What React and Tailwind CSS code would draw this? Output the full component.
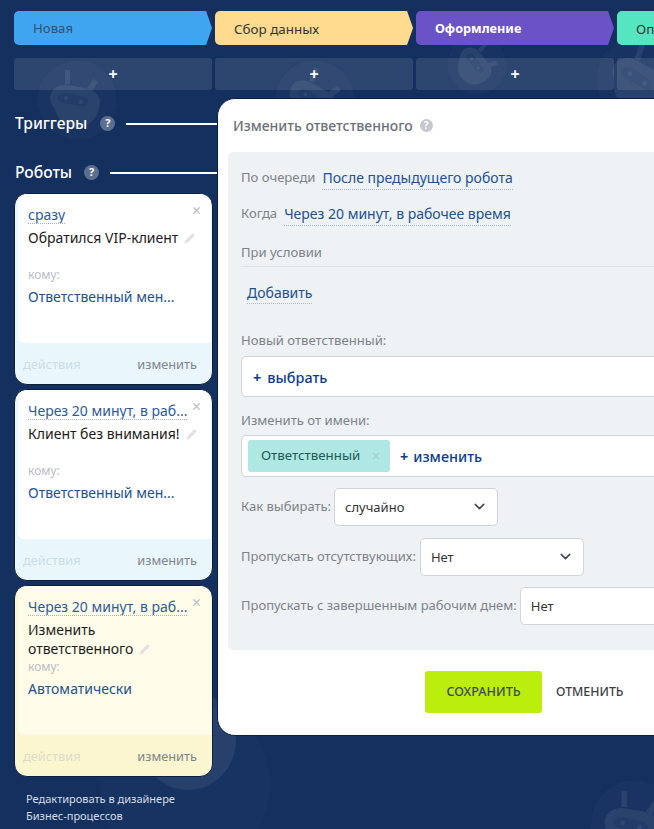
import React from "react";
import { ChevronDown, Pencil, X } from "lucide-react";

const stages = [
  { name: "Новая", style: "bg-[#40a5f0] text-[#33516f] text-[13.2px]" },
  { name: "Сбор данных", style: "bg-[#fedb8f] text-[#333] text-[13.4px]" },
  { name: "Оформление", style: "bg-[#6a52c7] text-white text-[12.7px] font-bold" },
  { name: "Оплата", style: "bg-[#55e6c1] text-[#333] text-[13.4px]" },
];

const Help = ({ className }) => (
  <span className={"flex items-center justify-center rounded-full font-bold text-white " + className}>?</span>
);

const Bot = ({ className }) => (
  <svg viewBox="0 0 80 80" className={"absolute " + className} fill="#fff">
    <circle cx="40" cy="40" r="39.5" opacity="0.025" />
    <g opacity="0.07">
      <path d="M28 10h5v14h-5zM56 19l5 3-6 9-5-3z" />
      <path d="M13 38c0-8 7-14 17-13l18 3c10 2 15 8 15 14-1 12-7 25-24 25-11 0-19-8-21-18-3-3-5-7-5-11z" />
    </g>
    <path d="M22 35c2-2 5-2 8-2l17 4c4 1 5 4 4 6-1 3-4 4-8 3l-16-3c-6-1-8-5-5-8z" fill="#14305f" opacity="0.3" />
    <circle cx="29" cy="38" r="2" opacity="0.07" />
    <circle cx="44" cy="42" r="2" opacity="0.07" />
  </svg>
);

const RobotCard = ({ delay, title, who, wrapped, tone }) => (
  <div className={"relative flex h-[192px] flex-col overflow-hidden rounded-[13px] border border-[#0d1f40] " + tone.foot}>
    <div className={"ml-[3px] mr-px h-full rounded-bl-[6px] pl-[10px] pr-2 pt-[12px] " + tone.body}>
      <div className="flex">
        <span className="max-w-[164px] truncate border-b border-dotted border-[#9fb1c9] text-[14px] leading-[17px] text-[#2c5a9a]">
          {delay}
        </span>
      </div>
      <div className="mt-[4px] text-[14px] leading-[19px] text-[#1c1c1c]">
        {title}
        <Pencil size={11} className="ml-[6px] inline -translate-y-px text-[#e2e2e2]" fill="#e2e2e2" />
      </div>
      <div className={"text-[12px] leading-[16px] text-[#b9bcc4] " + (wrapped ? "mt-[1px]" : "mt-[20px]")}>кому:</div>
      <div className="mt-[4px] text-[14px] leading-[19px] text-[#23508f]">{who}</div>
    </div>
    <X size={11} strokeWidth={3.5} className="absolute right-[10px] top-[11px] text-[#c4c8ce]" />
    <div className="flex h-[41px] shrink-0 items-center justify-between pl-2 pr-[15px] pt-[2px] text-[12.8px]">
      <span className={tone.faint}>действия</span>
      <span className="text-[#80858c]">изменить</span>
    </div>
  </div>
);

const Dotted = ({ children }) => (
  <span className="border-b border-dotted border-[#a9b8cc] pb-[1px] text-[14px] text-[#23508f]">{children}</span>
);

const Select = ({ value }) => (
  <div className="flex h-[38px] w-[164px] shrink-0 items-center justify-between rounded-[5px] border border-[#d0d4da] bg-white pl-[10px] pr-[9px] text-[13px] text-[#333]">
    <span className="pt-[3px]">{value}</span>
    <ChevronDown size={17} strokeWidth={2} className="text-[#3a4452]" />
  </div>
);

export default function App() {
  const blue = { body: "bg-white", foot: "bg-[#e9f7fd]", faint: "text-[#ccdde5]" };
  const yellow = { body: "bg-[#fffde9]", foot: "bg-[#fbf6cf]", faint: "text-[#dcdcc8]" };
  return (
    <div className="relative h-[829px] w-[654px] overflow-hidden bg-[#14305f] font-['Noto_Sans','Open_Sans',sans-serif]">
      {/* faint pattern behind the board */}
      <Bot className="left-[37px] top-[60px] h-[80px] w-[80px]" />
      <Bot className="left-[275px] top-[60px] h-[80px] w-[80px] rotate-[20deg]" />
      <Bot className="left-[447px] top-[35px] h-[60px] w-[60px] rotate-[40deg]" />
      <Bot className="left-[596px] top-[35px] h-[90px] w-[90px] rotate-[20deg]" />
      <Bot className="left-[590px] top-[780px] h-[90px] w-[90px]" />
      <div className="absolute left-[100px] top-[700px] h-[170px] w-[170px] rounded-full bg-white opacity-[0.015]" />
      <div className="absolute left-[140px] top-[690px] h-[100px] w-[96px] rounded-[50%] bg-white opacity-[0.07]" />

      <div className="relative flex flex-col pl-[14px] pt-[11px]">
        <div className="flex w-[800px] gap-[3px]">
          {stages.map((s) => (
            <div
              key={s.name}
              className={"flex h-[34px] w-[198px] shrink-0 items-center rounded-l-[5px] pl-[19px] pt-[2px] [clip-path:polygon(0_0,97%_0,100%_50%,97%_100%,0_100%)] " + s.style}
            >
              {s.name}
            </div>
          ))}
        </div>
        <div className="mt-[13px] flex w-[800px] gap-[3px]">
          {stages.map((s) => (
            <div key={s.name} className="flex h-[32px] w-[198px] shrink-0 items-center justify-center rounded-[3px] bg-white/[0.11] text-[16px] font-bold text-white">
              {s.name === "Оплата" ? "" : "+"}
            </div>
          ))}
        </div>

        <div className="mt-[21px] flex h-[25px] items-center pl-px text-[15.6px] font-medium text-white">
          Триггеры
          <Help className="ml-[13px] h-[15px] w-[15px] bg-[#5c6f8f] text-[11px]" />
          <div className="ml-[11px] h-[2px] w-[100px] bg-white" />
        </div>
        <div className="mt-[24px] flex h-[25px] items-center pl-px text-[15.6px] font-medium text-white">
          Роботы
          <Help className="ml-[12px] h-[15px] w-[15px] bg-[#5c6f8f] text-[11px]" />
          <div className="ml-[11px] h-[2px] w-[115px] bg-white" />
        </div>

        <div className="mt-[8px] flex w-[199px] flex-col gap-[4px]">
          <RobotCard delay="сразу" title="Обратился VIP-клиент" who="Ответственный мен..." tone={blue} />
          <RobotCard delay="Через 20 минут, в раб..." title="Клиент без внимания!" who="Ответственный мен..." tone={blue} />
          <RobotCard delay="Через 20 минут, в раб..." title="Изменить ответственного" who="Автоматически" wrapped tone={yellow} />
        </div>
        <div className="mt-[13px] pl-[12px] text-[11px] leading-[17px] text-[#d6dde8]">
          Редактировать в дизайнере
          <br />
          Бизнес-процессов
        </div>
      </div>

      <div className="absolute left-[217px] top-[98px] h-[638px] w-[460px] rounded-[18px] border border-[#0d1f40] bg-white">
        <div className="flex h-[53px] items-center pl-[15px] text-[14px] font-medium text-[#6b7079]">
          Изменить ответственного
          <Help className="ml-[7px] h-[13px] w-[13px] bg-[#c4c7cc] text-[10px]" />
        </div>
        <div className="ml-[10px] h-[498px] rounded-[5px] bg-[#eef2f5] pl-[13px] pt-[15px] text-[13.1px] text-[#7c828a]">
          <div className="flex h-[22px] items-center gap-[7px]">
            По очереди <Dotted>После предыдущего робота</Dotted>
          </div>
          <div className="mt-[14px] flex h-[22px] items-center gap-[7px]">
            Когда <Dotted>Через 20 минут, в рабочее время</Dotted>
          </div>
          <div className="mt-[18px] border-b border-[#dfe2e6] pb-[5px] leading-[18px]">При условии</div>
          <div className="mt-[15px] pl-[6px]">
            <Dotted>Добавить</Dotted>
          </div>
          <div className="mt-[27px] leading-[18px]">Новый ответственный:</div>
          <div className="mt-[7px] flex h-[41px] items-center rounded-[5px] border border-[#d0d4da] bg-white pl-[11px] pt-[3px] text-[14.4px] font-medium text-[#0b3d8c]">
            <span className="mr-[6px] font-bold">+</span> выбрать
          </div>
          <div className="mt-[14px] leading-[18px]">Изменить от имени:</div>
          <div className="mt-[6px] flex h-[42px] items-center rounded-[5px] border border-[#d0d4da] bg-white pl-[6px] text-[14.4px] font-medium text-[#0b3d8c]">
            <span className="flex h-[32px] w-[142px] items-center rounded-[3px] bg-[#afe7e2] pl-[13px] pt-[1px] text-[13.3px] font-normal text-[#1d5a57]">
              Ответственный
              <X size={10} strokeWidth={3} className="ml-[11px] text-[#a9cdca]" />
            </span>
            <span className="ml-[10px] mr-[5px] pt-[2px] font-bold">+</span>
            <span className="pt-[2px]">изменить</span>
          </div>
          <div className="mt-[11px] flex items-center gap-[3px] whitespace-nowrap text-[13px]">
            Как выбирать: <Select value="случайно" />
          </div>
          <div className="mt-[12px] flex items-center gap-[4px] whitespace-nowrap text-[13px]">
            Пропускать отсутствующих: <Select value="Нет" />
          </div>
          <div className="mt-[11px] flex items-center gap-[3px] whitespace-nowrap text-[13px]">
            Пропускать с завершенным рабочим днем: <Select value="Нет" />
          </div>
        </div>
        <div className="mt-[21px] flex items-center pl-[207px]">
          <div className="flex h-[42px] w-[117px] items-center justify-center rounded-[3px] bg-[#bbed0d] text-[12.6px] font-medium text-[#3c4a5c]">
            СОХРАНИТЬ
          </div>
          <div className="ml-[14px] text-[12.3px] font-medium text-[#3b3f45]">ОТМЕНИТЬ</div>
        </div>
      </div>
    </div>
  );
}
